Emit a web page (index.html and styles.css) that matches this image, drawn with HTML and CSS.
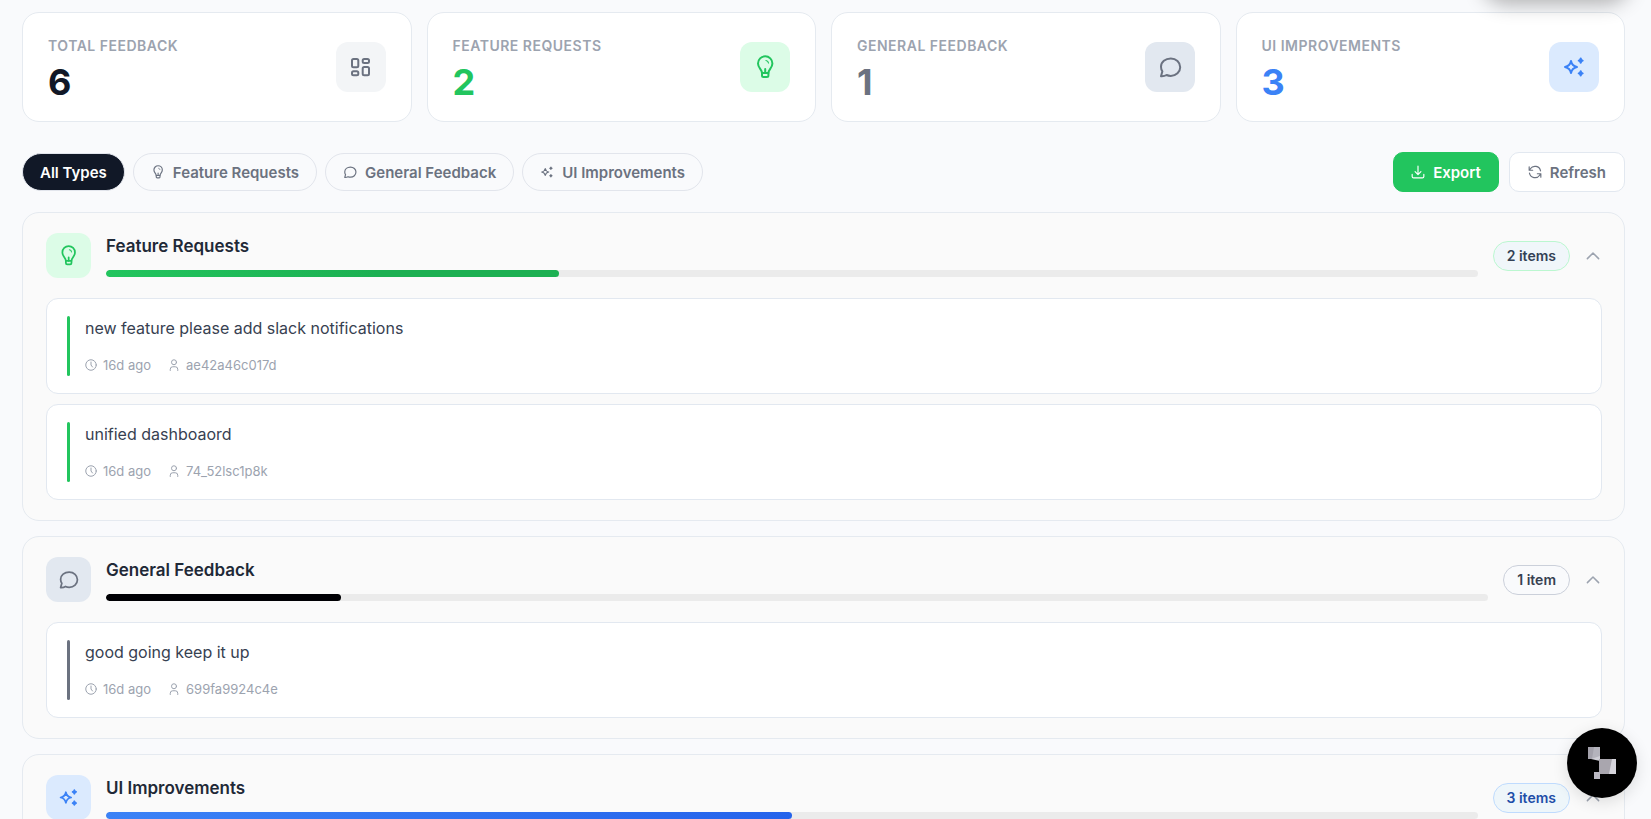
FILE: index.html
```html
<!DOCTYPE html>
<html lang="en">
<head>
    <meta charset="UTF-8">
    <meta name="viewport" content="width=device-width, initial-scale=1.0">
    <title>Feedback</title>
    <link rel="stylesheet" href="styles.css">
</head>
<body>
    <!-- Shared icons -->
    <svg class="sprite" aria-hidden="true">
        <symbol id="icon-grid" viewBox="0 0 24 24">
            <rect x="3" y="4" width="6.3" height="8.3" rx="1.5"/>
            <rect x="13.7" y="4" width="6.3" height="4" rx="1.5"/>
            <rect x="13.7" y="12" width="6.3" height="8.3" rx="1.5"/>
            <rect x="3" y="16.3" width="6.3" height="4" rx="1.5"/>
        </symbol>
        <symbol id="icon-bulb" viewBox="0 0 24 24">
            <path d="M9 18c0-3.500-4-5-4-9.500a7.200 7.200 0 0 1 14.400 0c0 4.500-4 6-4 9.500z"/>
            <path d="M9 18v2.500a1.500 1.500 0 0 0 1.500 1.500h3.400a1.500 1.500 0 0 0 1.500-1.500v-2.500M12.200 14v4"/>
            <path d="M13 5.500a3 3 0 0 1 2.500 2.500" stroke-width="1.200"/>
        </symbol>
        <symbol id="icon-chat" viewBox="0 0 24 24">
            <path d="M12.800 3.500C7.300 3.500 3 7 3 11.800c0 2 .5 3.400 1.400 4.500L3 21.200c3 .2 4.300-.4 5.600-1.200 1.200.6 2.600.9 4.200.9 5.300 0 9.400-3.900 9.400-8.700s-4.100-8.700-9.400-8.700z"/>
        </symbol>
        <symbol id="icon-sparkles" viewBox="0 0 24 24">
            <path d="M9 6c.8 3.900 2.300 5.200 6 6-3.700.8-5.200 2.100-6 6-.8-3.900-2.300-5.200-6-6 3.700-.8 5.200-2.100 6-6z"/>
            <path class="solid" d="M18.700 3.500c.3 1.400.7 1.800 2 2.100-1.300.3-1.700.7-2 2.100-.3-1.400-.7-1.800-2-2.100 1.300-.3 1.700-.7 2-2.100zM18.700 16.300c.3 1.400.7 1.800 2 2.100-1.300.3-1.700.7-2 2.100-.3-1.400-.7-1.800-2-2.100 1.300-.3 1.700-.7 2-2.100z"/>
        </symbol>
        <symbol id="icon-download" viewBox="0 0 24 24">
            <path d="M12 2v14M7 11.500l5 5 5-5M2 16v3.500A2.500 2.500 0 0 0 4.500 22h15a2.500 2.500 0 0 0 2.500-2.500V16"/>
        </symbol>
        <symbol id="icon-refresh" viewBox="0 0 24 24">
            <path d="M21.500 10A9.700 9.700 0 0 0 4 6.500L2 9M2 3v6h6M2.500 14A9.700 9.700 0 0 0 20 17.500l2-2.500M22 21v-6h-6"/>
        </symbol>
        <symbol id="icon-clock" viewBox="0 0 24 24">
            <circle cx="12" cy="12" r="10.500"/>
            <path d="M12 6v6l3 4"/>
        </symbol>
        <symbol id="icon-user" viewBox="0 0 24 24">
            <circle cx="12" cy="6.500" r="5"/>
            <path d="M4.500 23v-2.500a5 5 0 0 1 5-5h5a5 5 0 0 1 5 5V23"/>
        </symbol>
        <symbol id="icon-chevron" viewBox="0 0 24 24">
            <path d="M4.500 15.500l7.500-7.500 7.500 7.500"/>
        </symbol>
    </svg>

    <div class="top-panel"></div>

    <main class="page">
        <section class="stats">
            <div class="stat">
                <div>
                    <div class="stat-label">Total Feedback</div>
                    <div class="stat-value">6</div>
                </div>
                <div class="stat-icon"><svg class="icon"><use href="#icon-grid"/></svg></div>
            </div>
            <div class="stat feature">
                <div>
                    <div class="stat-label">Feature Requests</div>
                    <div class="stat-value">2</div>
                </div>
                <div class="stat-icon"><svg class="icon"><use href="#icon-bulb"/></svg></div>
            </div>
            <div class="stat general">
                <div>
                    <div class="stat-label">General Feedback</div>
                    <div class="stat-value">1</div>
                </div>
                <div class="stat-icon"><svg class="icon"><use href="#icon-chat"/></svg></div>
            </div>
            <div class="stat ui">
                <div>
                    <div class="stat-label">UI Improvements</div>
                    <div class="stat-value">3</div>
                </div>
                <div class="stat-icon"><svg class="icon"><use href="#icon-sparkles"/></svg></div>
            </div>
        </section>

        <div class="toolbar">
            <div class="filters">
                <button type="button" class="filter active">All Types</button>
                <button type="button" class="filter"><svg class="icon"><use href="#icon-bulb"/></svg>Feature Requests</button>
                <button type="button" class="filter"><svg class="icon"><use href="#icon-chat"/></svg>General Feedback</button>
                <button type="button" class="filter"><svg class="icon"><use href="#icon-sparkles"/></svg>UI Improvements</button>
            </div>
            <div class="actions">
                <button type="button" class="action export"><svg class="icon"><use href="#icon-download"/></svg>Export</button>
                <button type="button" class="action"><svg class="icon"><use href="#icon-refresh"/></svg>Refresh</button>
            </div>
        </div>

        <section class="group feature">
            <header class="group-header">
                <div class="group-icon"><svg class="icon"><use href="#icon-bulb"/></svg></div>
                <div class="group-info">
                    <h2>Feature Requests</h2>
                    <div class="track"><div class="fill" style="width: 33%"></div></div>
                </div>
                <span class="count">2 items</span>
                <button type="button" class="toggle" aria-label="Collapse Feature Requests"><svg class="icon"><use href="#icon-chevron"/></svg></button>
            </header>
            <div class="items">
                <article class="item">
                    <p>new feature please add slack notifications</p>
                    <div class="meta">
                        <span><svg class="icon"><use href="#icon-clock"/></svg>16d ago</span>
                        <span><svg class="icon"><use href="#icon-user"/></svg>ae42a46c017d</span>
                    </div>
                </article>
                <article class="item">
                    <p>unified dashboaord</p>
                    <div class="meta">
                        <span><svg class="icon"><use href="#icon-clock"/></svg>16d ago</span>
                        <span><svg class="icon"><use href="#icon-user"/></svg>74_52lsc1p8k</span>
                    </div>
                </article>
            </div>
        </section>

        <section class="group general">
            <header class="group-header">
                <div class="group-icon"><svg class="icon"><use href="#icon-chat"/></svg></div>
                <div class="group-info">
                    <h2>General Feedback</h2>
                    <div class="track"><div class="fill" style="width: 17%"></div></div>
                </div>
                <span class="count">1 item</span>
                <button type="button" class="toggle" aria-label="Collapse General Feedback"><svg class="icon"><use href="#icon-chevron"/></svg></button>
            </header>
            <div class="items">
                <article class="item">
                    <p>good going keep it up</p>
                    <div class="meta">
                        <span><svg class="icon"><use href="#icon-clock"/></svg>16d ago</span>
                        <span><svg class="icon"><use href="#icon-user"/></svg>699fa9924c4e</span>
                    </div>
                </article>
            </div>
        </section>

        <section class="group ui">
            <header class="group-header">
                <div class="group-icon"><svg class="icon"><use href="#icon-sparkles"/></svg></div>
                <div class="group-info">
                    <h2>UI Improvements</h2>
                    <div class="track"><div class="fill" style="width: 50%"></div></div>
                </div>
                <span class="count">3 items</span>
                <button type="button" class="toggle" aria-label="Collapse UI Improvements"><svg class="icon"><use href="#icon-chevron"/></svg></button>
            </header>
        </section>
    </main>

    <button type="button" class="widget" aria-label="Open feedback widget">
        <svg viewBox="0 0 30 32">
            <path d="M1 0h12v12H1z" fill="#b4b3bc"/>
            <path d="M1 0h6L5 12H1z" fill="#a3a1ab"/>
            <path d="M4 12l9-3v5z" fill="#cfced6"/>
            <path d="M12 12h17v15H12z" fill="#a9a6ae"/>
            <path d="M25 12h4v15h-7z" fill="#d6d5dc"/>
            <path d="M7 25h6v7H7z" fill="#bbb9c2"/>
        </svg>
    </button>
</body>
</html>
```
FILE: styles.css
```css
* {
    box-sizing: border-box;
}
body {
    margin: 0;
    font-family: Inter, "Liberation Sans", sans-serif;
    background: #f9fafc;
    color: #111827;
    height: 100vh;
    overflow: hidden;
}
button {
    font-family: inherit;
    cursor: pointer;
}
.sprite {
    display: none;
}
.icon {
    display: block;
    flex: none;
    fill: none;
    stroke: currentColor;
    stroke-width: 2;
    stroke-linecap: round;
    stroke-linejoin: round;
}
.solid {
    fill: currentColor;
}
.page {
    padding: 12px 26px 0 22px;
}

/* Type colours */
.feature {
    --main: #22c55e;
    --tint: #dcfce7;
    --bar: linear-gradient(90deg, #22c55e, #1cb052 60%);
    --pill-border: #bbf7d0;
    --pill-bg: #f0f6fa;
    --pill-text: #334155;
}
.general {
    --main: #6b7280;
    --tint: #e2e8f0;
    --bar: #000004;
    --pill-border: #cbd0da;
    --pill-bg: #f9fafc;
    --pill-text: #374151;
}
.ui {
    --main: #3b82f6;
    --tint: #dbeafe;
    --bar: linear-gradient(90deg, #3b82f6, #2563eb);
    --pill-border: #bfdbfe;
    --pill-bg: #eef6fa;
    --pill-text: #1e4ea8;
}

/* Stat cards */
.stats {
    display: grid;
    grid-template-columns: repeat(4, 1fr);
    gap: 15px;
}
.stat {
    display: flex;
    align-items: center;
    justify-content: space-between;
    height: 110px;
    padding: 0 25px;
    background: #fff;
    border: 1px solid #e5eaf0;
    border-radius: 17px;
}
.stat-label {
    font-size: 14px;
    line-height: 20px;
    font-weight: 600;
    letter-spacing: 0.5px;
    text-transform: uppercase;
    color: #9ca3af;
}
.stat-value {
    margin-top: 9px;
    font-size: 36px;
    line-height: 34px;
    font-weight: 700;
    color: var(--main, #111827);
}
.stat-icon {
    display: flex;
    align-items: center;
    justify-content: center;
    width: 50px;
    height: 50px;
    border-radius: 12px;
    background: var(--tint, #f3f5f7);
    color: var(--main, #6b7280);
}
.stat-icon .icon {
    width: 24px;
    height: 24px;
}

/* Filters and actions */
.toolbar {
    display: flex;
    align-items: center;
    justify-content: space-between;
    margin: 30px 0 20px;
}
.filters {
    display: flex;
    gap: 8px;
}
.filter {
    display: flex;
    align-items: center;
    gap: 8px;
    height: 38px;
    padding: 0 17px;
    border: 1px solid #e2e5ec;
    border-radius: 19px;
    background: transparent;
    color: #6b7280;
    font-size: 15px;
    font-weight: 600;
}
.filter.active {
    background: #111827;
    color: #fff;
}
.filter .icon,
.action .icon {
    width: 14px;
    height: 14px;
}
.actions {
    display: flex;
    gap: 10px;
}
.action {
    display: flex;
    align-items: center;
    gap: 8px;
    height: 40px;
    padding: 0 18px;
    border: 1px solid #e2e8f0;
    border-radius: 10px;
    background: #fff;
    color: #6b7280;
    font-size: 15px;
    font-weight: 600;
}
.action.export {
    padding: 0 17px;
    background: #22c55e;
    border-color: #22c55e;
    color: #fff;
}

/* Groups */
.group {
    margin-bottom: 15px;
    padding: 20px 22px 20px 23px;
    background: #fafafa;
    border: 1px solid #e5eaf0;
    border-radius: 17px;
}
.group-header {
    display: flex;
    align-items: center;
}
.group-icon {
    display: flex;
    align-items: center;
    justify-content: center;
    width: 45px;
    height: 45px;
    border-radius: 12px;
    background: var(--tint);
    color: var(--main);
}
.group-icon .icon {
    width: 21px;
    height: 21px;
}
.group-info {
    flex: 1;
    margin: 0 15px;
}
h2 {
    margin: 0 0 12px;
    font-size: 17px;
    line-height: 24px;
    font-weight: 600;
    color: #1f2937;
}
.track {
    height: 7px;
    border-radius: 4px;
    background: #ebebeb;
    overflow: hidden;
}
.fill {
    height: 100%;
    border-radius: 4px;
    background: var(--bar);
}
.count {
    height: 30px;
    padding: 0 13px;
    border: 1px solid var(--pill-border);
    border-radius: 15px;
    background: var(--pill-bg);
    color: var(--pill-text);
    font-size: 14px;
    line-height: 28px;
    font-weight: 600;
}
.toggle {
    margin-left: 14px;
    padding: 0;
    border: 0;
    background: none;
    color: #9ca3af;
}
.toggle .icon {
    width: 18px;
    height: 18px;
}
.items {
    display: flex;
    flex-direction: column;
    gap: 10px;
    margin-top: 20px;
}
.item {
    position: relative;
    padding: 17px 38px;
    background: #fff;
    border: 1px solid #e2e8f0;
    border-radius: 12px;
}
.item::before {
    content: "";
    position: absolute;
    left: 20px;
    top: 17px;
    bottom: 17px;
    width: 3px;
    border-radius: 2px;
    background: var(--main);
}
.item p {
    margin: 0 0 14px;
    font-size: 16px;
    line-height: 24px;
    color: #374151;
}
.meta {
    display: flex;
    gap: 17px;
    color: #9ca3af;
    font-size: 13px;
    line-height: 22px;
}
.meta span {
    display: flex;
    align-items: center;
    gap: 6px;
}
.meta .icon {
    width: 12px;
    height: 12px;
}

/* Overlays */
.top-panel {
    position: fixed;
    top: -50px;
    right: 21px;
    width: 148px;
    height: 48px;
    border-radius: 24px;
    box-shadow: 0 6px 20px rgba(0, 0, 0, 0.3);
}
.widget {
    position: fixed;
    right: 14px;
    bottom: 21px;
    display: flex;
    align-items: center;
    justify-content: center;
    width: 70px;
    height: 70px;
    padding: 0;
    border: 0;
    border-radius: 50%;
    background: #000;
    box-shadow: 0 4px 16px rgba(0, 0, 0, 0.12);
}
.widget svg {
    width: 30px;
    height: 32px;
}
```
